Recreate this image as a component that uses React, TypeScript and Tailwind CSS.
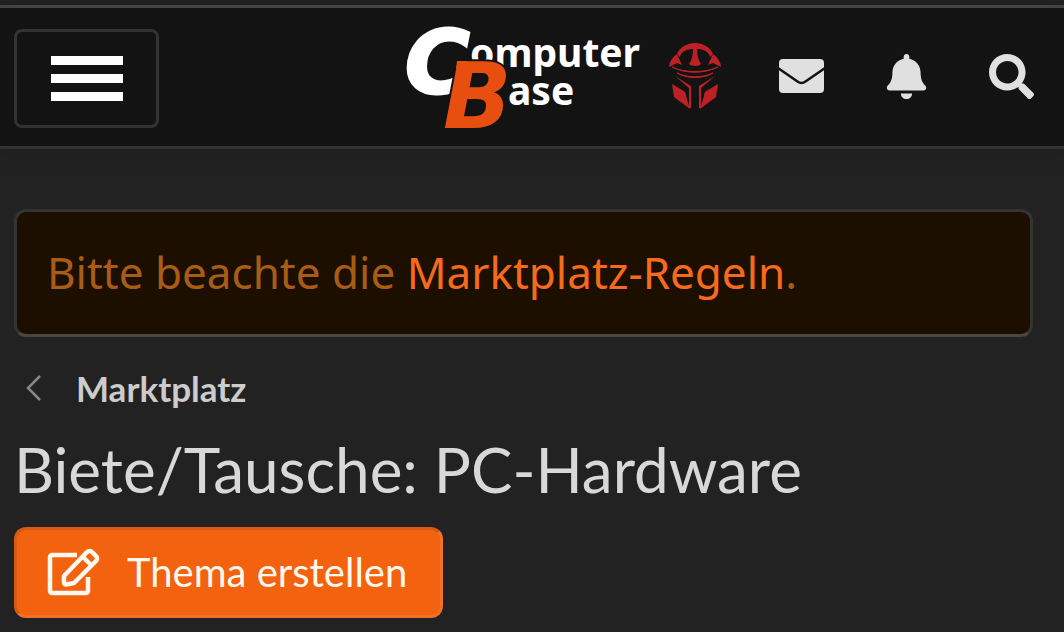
import React from "react";
import { FaBell, FaSearch } from "react-icons/fa";

function Logo() {
  return (
    <svg viewBox="0 0 240 112" className="h-28 w-60 overflow-visible" role="img" aria-label="ComputerBase">
      <g fill="#fff" fontFamily="'Noto Sans', sans-serif" fontWeight="700" fontSize="39">
        <text x="66" y="47">omputer</text>
        <text x="104" y="85">ase</text>
      </g>
      <g fontFamily="'DejaVu Sans', sans-serif" fontWeight="700" fontStyle="italic">
        <text x="1" y="73" fontSize="88" fill="#fff" stroke="#fff" strokeWidth="3">C</text>
        <text x="39" y="108" fontSize="90" fill="#e84e0f" stroke="#131313" strokeWidth="4" paintOrder="stroke">B</text>
      </g>
      <path d="M53 41h10v14h-8c1-4 1-6-3-7z" fill="#e84e0f" />
    </svg>
  );
}

function Avatar() {
  return (
    <svg viewBox="2 0 70 90" className="h-[90px] w-[70px]" fill="#bd2125" aria-hidden="true">
      <path d="M17 23C20 16 27 12 35 12S50 16 53 23l-3 3c-1-5-6-8-13-8 0 6 1 11 4 15-2 2.500-10 2.500-12 0 3-4 4-9 4-15-7 0-12 3-13 8z" />
      <path d="M17 23l5 11-5-2-8 4c0-5 4-10 8-13zM53 23l-5 11 5-2 8 4c0-5-4-10-8-13z" />
      <path d="M12 36c14 7 32 7 46 0-12 6-34 6-46 0z" stroke="#bd2125" strokeWidth="1" />
      <path d="M17 42c11 5 25 5 36 0-9 6-27 6-36 0z" stroke="#bd2125" strokeWidth="1" />
      <path d="M15 45l16 10v22h-2V57zM55 45L39 55v22h2V57z" />
      <path d="M12 53l10 6c3 1 4 3 4 6l4 13-16-12zM58 53l-10 6c-3 1-4 3-4 6l-4 13 16-12z" />
    </svg>
  );
}

function EnvelopeIcon() {
  return (
    <svg viewBox="0 0 45 34" className="h-[34px] w-[45px]" aria-hidden="true">
      <rect width="45" height="34" rx="4" fill="currentColor" />
      <path d="M-1 9l19.500 13.500q4 3 8 0L46 9" fill="none" stroke="#131313" strokeWidth="2.500" />
    </svg>
  );
}

function ComposeIcon() {
  return (
    <svg viewBox="0 0 54 48" className="h-12 w-[54px]" fill="none" stroke="currentColor" strokeWidth="4.500" strokeLinejoin="round" aria-hidden="true">
      <path d="M30 7H5a2 2 0 0 0-2 2v34a2 2 0 0 0 2 2h34a2 2 0 0 0 2-2V29" />
      <path d="M17 28L40 4a3.500 3.500 0 0 1 5 0l4 4a3.500 3.500 0 0 1 0 5L27 35l-8 1.500a2 2 0 0 1-2-2z" />
      <path d="M36 9l8 8" />
    </svg>
  );
}

export default function App() {
  return (
    <div className="min-h-screen bg-[#222] pt-[5px] font-['Lato','Noto_Sans',sans-serif] text-[#d8d8d8]">
      <header className="flex h-36 items-start justify-between border-y-[3px] border-t-[#444] border-b-[#333] bg-[#131313] pt-3 pl-3.5 shadow-[0_4px_20px_rgba(0,0,0,0.12)]">
        <button type="button" aria-label="Menü" className="mt-[9px] flex h-[99px] w-[145px] flex-col items-center justify-center gap-[9px] rounded-lg border-[3px] border-[#333]">
          <span className="h-[9px] w-[72px] bg-white" />
          <span className="h-[9px] w-[72px] bg-white" />
          <span className="h-[9px] w-[72px] bg-white" />
        </button>
        <div className="flex items-center">
          <a href="#start" aria-label="ComputerBase">
            <Logo />
          </a>
          <nav className="flex items-center text-[45px] text-[#e0e0e0]">
            <a href="#profil" aria-label="Profil" className="flex w-[105px] justify-center"><Avatar /></a>
            <a href="#nachrichten" aria-label="Nachrichten" className="flex h-[45px] w-[105px] items-center justify-center"><EnvelopeIcon /></a>
            <a href="#hinweise" aria-label="Hinweise" className="flex w-[105px] justify-center"><FaBell /></a>
            <a href="#suche" aria-label="Suche" className="flex w-[105px] justify-center"><FaSearch /></a>
          </nav>
        </div>
      </header>

      <main className="pt-[60px] pr-[31px] pb-3.5 pl-3.5">
        <div className="rounded-xl border-[3px] border-[#353331] border-b-[#4a4640] bg-[#1c0f00] px-[30px] pt-[29px] pb-[31px] font-['Noto_Sans',sans-serif] text-[44px] leading-[62px] text-[#a85c16]">
          Bitte beachte die <a href="#regeln" className="text-[#f56a1c]">Marktplatz-Regeln</a>.
        </div>

        <nav aria-label="Brotkrumen" className="mt-7">
          <a href="#marktplatz" className="flex items-center gap-[34px] pl-3 text-[35px] leading-[46px] font-bold text-[#ccc]">
            <svg viewBox="0 0 16 26" className="h-[26px] w-4" fill="none" stroke="#888" strokeWidth="2.500" aria-hidden="true">
              <path d="M14 1L2 13l12 12" />
            </svg>
            Marktplatz
          </a>
        </nav>

        <h1 className="mt-5 text-[62px] leading-[76px]">Biete/Tausche: PC-Hardware</h1>

        <button type="button" className="mt-5 flex h-[91px] items-center gap-[26px] rounded-xl border-[3px] border-[#d8590f] border-r-[#f07028] border-b-[#f07028] bg-[#f2620f] pr-[33px] pb-0.5 pl-[30px] text-[40px] text-[#fff8ee]">
          <ComposeIcon />
          Thema erstellen
        </button>
      </main>
    </div>
  );
}
